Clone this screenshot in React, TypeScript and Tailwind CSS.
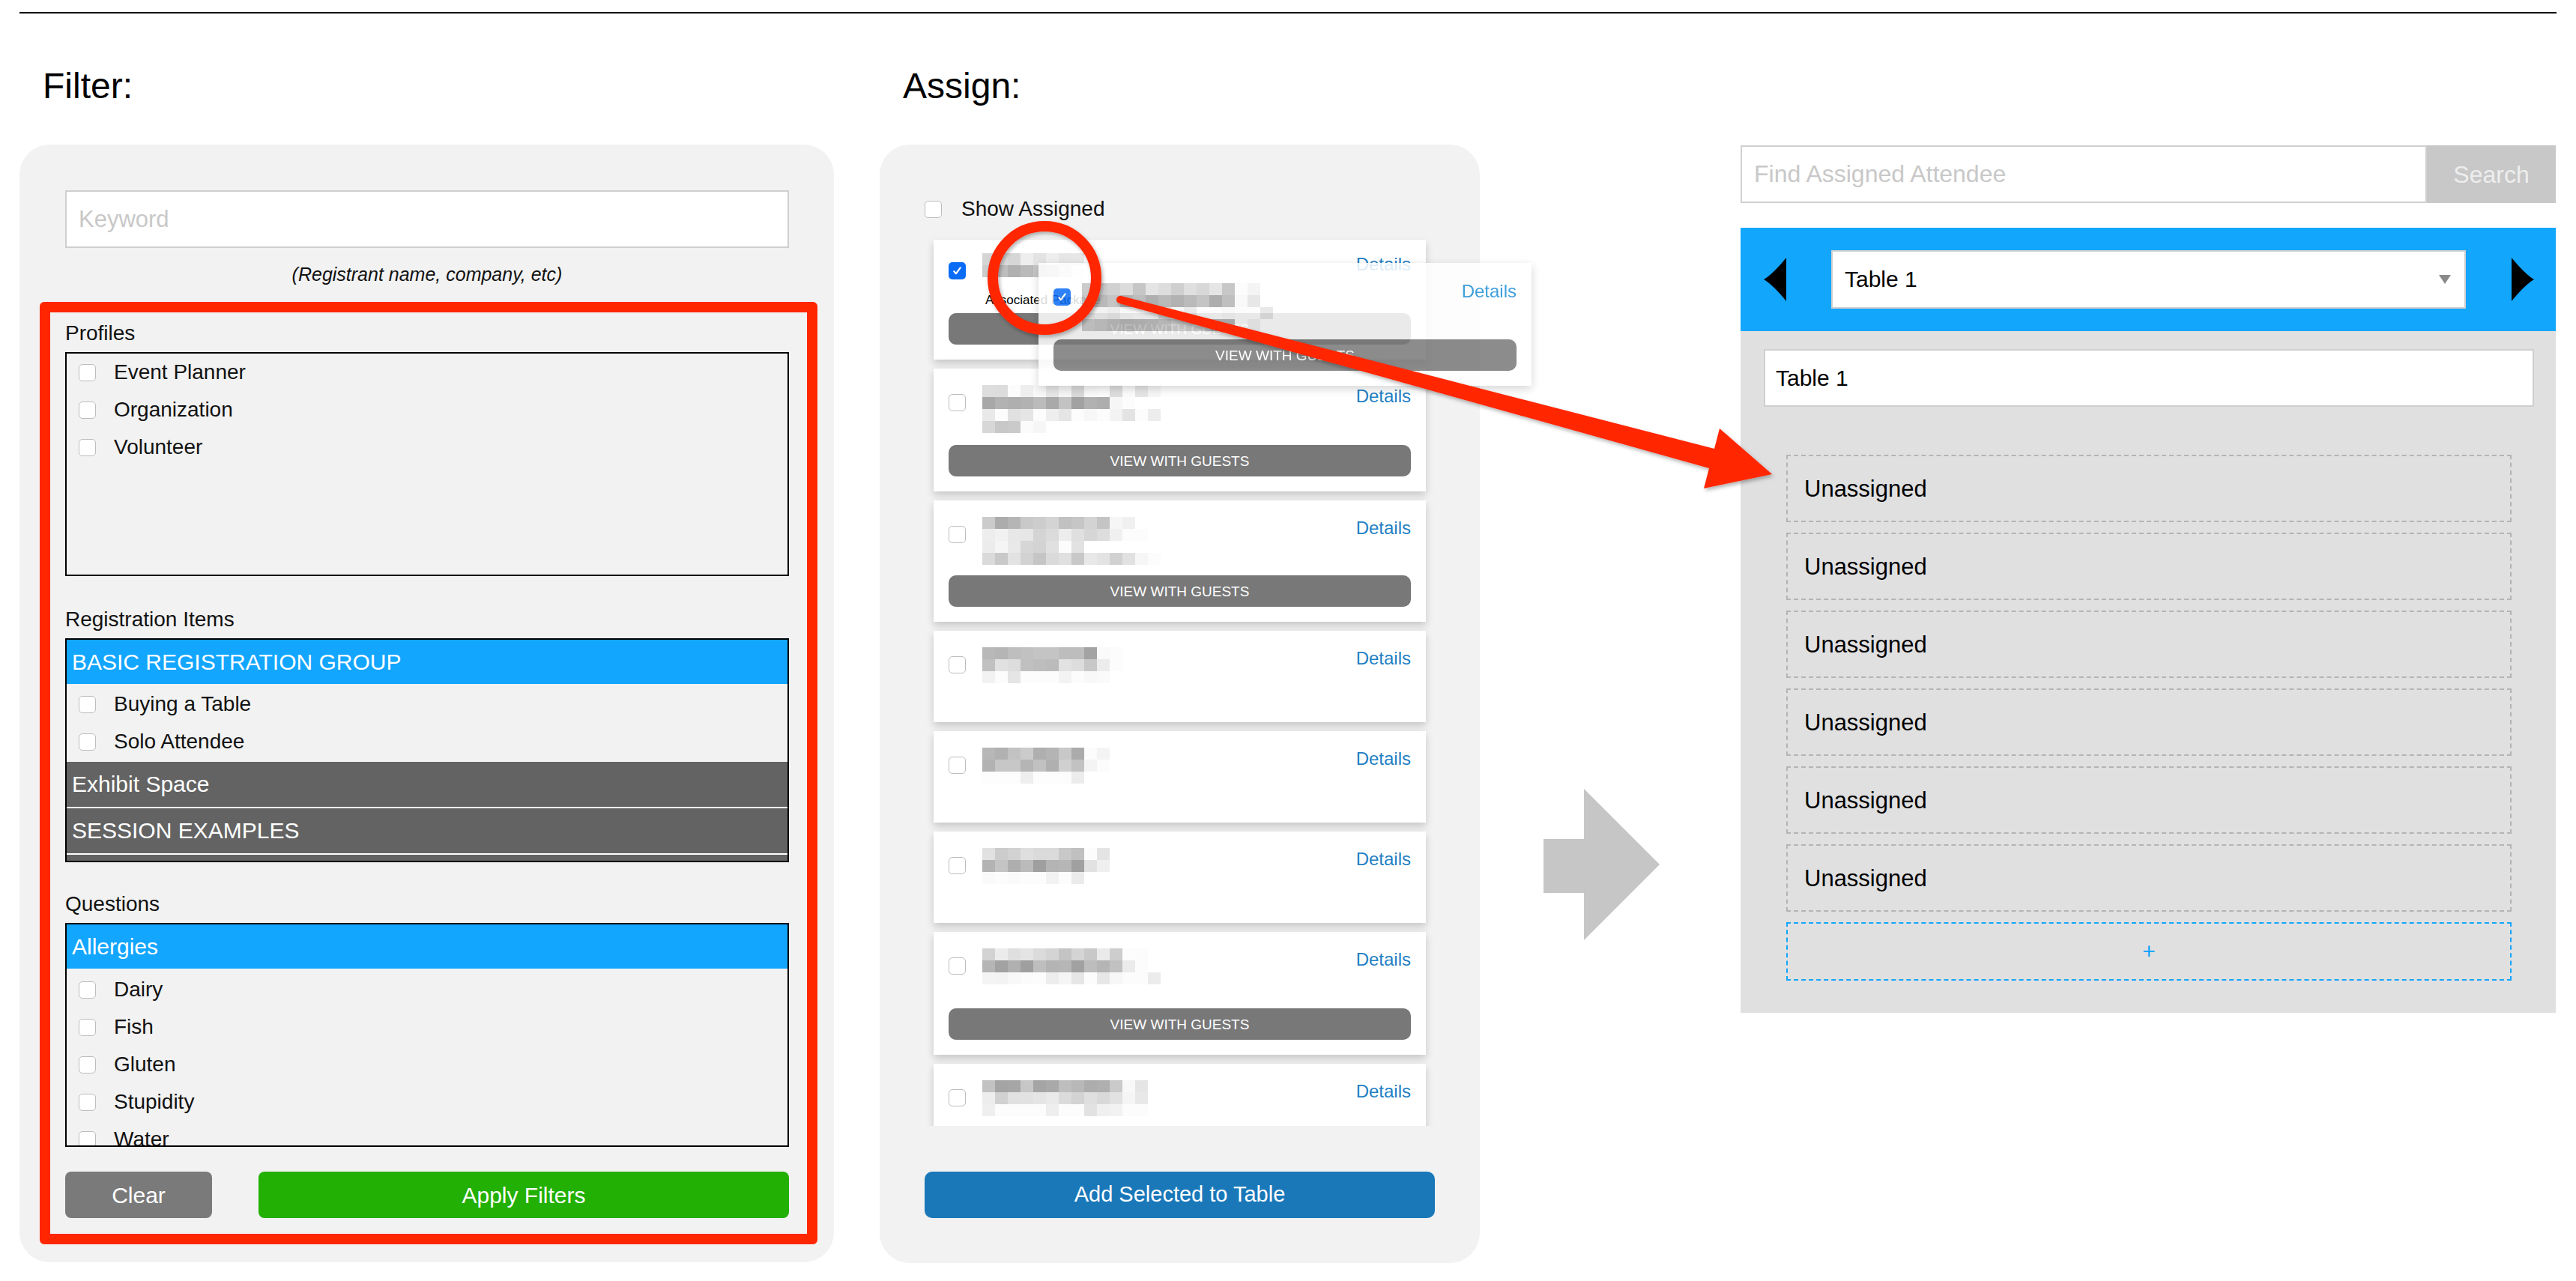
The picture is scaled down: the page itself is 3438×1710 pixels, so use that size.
import { FC } from "react";

// Shared font stack for the whole board
const FONT = "font-['Liberation_Sans',Arial,Helvetica,sans-serif]";

// Pseudo random value in [0, 1) for the pixelated name blocks
const noise = (seed: number, i: number) => {
	const v = Math.sin(seed * 78.233 + i * 12.9898) * 43758.5453;
	return v - Math.floor(v);
};

interface MosaicRow {
	tone: number;
	len: number;
}

// Pixelated placeholder used to hide attendee names
const Mosaic: FC<{ seed: number; rows: MosaicRow[]; className?: string }> = ({ seed, rows, className = "" }) => {
	return (
		<div className={`flex flex-col ${className}`}>
			{rows.map((row, r) => (
				<div className="flex" key={`row_${r}`}>
					{Array.from({ length: row.len + 2 }).map((_, c) => {
						const n = noise(seed, r * 31 + c);
						const base = c >= row.len ? 246 : row.tone;
						const g = Math.max(140, Math.min(252, Math.round(base + (n - 0.5) * 40)));
						return (
							<span
								key={`cell_${r}_${c}`}
								className="block h-[16px] w-[17px]"
								style={{ backgroundColor: `rgb(${g},${g},${g})` }}
							/>
						);
					})}
				</div>
			))}
		</div>
	);
};

// Checkbox drawn with spans so it looks the same everywhere
const Check: FC<{ checked?: boolean; className?: string }> = ({ checked, className = "" }) =>
	checked ? (
		<span
			className={`flex h-[23px] w-[23px] shrink-0 items-center justify-center rounded-[5px] bg-[#0a6cf5] ${className}`}
		>
			<svg viewBox="0 0 16 16" className="h-[15px] w-[15px]" fill="none" stroke="white" strokeWidth="2.3" strokeLinecap="round" strokeLinejoin="round">
				<path d="M3.5 8.8l2.8 3.2L12.5 3.5" />
			</svg>
		</span>
	) : (
		<span className={`block h-[23px] w-[23px] shrink-0 rounded-[5px] border border-[#bdbdbd] bg-white ${className}`} />
	);

// Filter option row
const Option: FC<{ label: string }> = ({ label }) => (
	<div className="flex h-[50px] shrink-0 items-center pl-[16px]">
		<Check />
		<span className="ml-[24px] text-[28px] leading-none text-[#111]">{label}</span>
	</div>
);

// Group header inside a filter list
const GroupBar: FC<{ label?: string; active?: boolean }> = ({ label, active }) => (
	<div
		className={
			active
				? "flex h-[59px] shrink-0 items-center bg-[#13a6ff] pl-[7px] text-[30px] leading-none text-white"
				: "flex h-[62px] shrink-0 items-center border-b-2 border-white bg-[#636363] pl-[7px] text-[30px] leading-none text-white"
		}
	>
		{label}
	</div>
);

const FilterBox: FC<{ title: string; className?: string; children: React.ReactNode }> = ({ title, className = "", children }) => (
	<div className={className}>
		<div className="h-[28px] text-[28px] leading-none text-[#111]">{title}</div>
		<div className="mt-[11px] flex h-[299px] flex-col overflow-hidden border-2 border-black">{children}</div>
	</div>
);

interface AttendeeCard {
	height: string;
	pt: string;
	checked?: boolean;
	button?: boolean;
	assoc?: boolean;
	seed: number;
	rows: MosaicRow[];
}

const cards: AttendeeCard[] = [
	{ height: "h-[160px]", pt: "pt-[21px]", checked: true, button: true, assoc: true, seed: 3, rows: [{ tone: 222, len: 7 }, { tone: 190, len: 6 }] },
	{ height: "h-[164px]", pt: "pt-[25px]", button: true, seed: 7, rows: [{ tone: 236, len: 12 }, { tone: 178, len: 10 }, { tone: 242, len: 12 }, { tone: 218, len: 3 }] },
	{ height: "h-[162px]", pt: "pt-[25px]", button: true, seed: 11, rows: [{ tone: 192, len: 10 }, { tone: 222, len: 11 }, { tone: 226, len: 6 }, { tone: 214, len: 12 }] },
	{ height: "h-[122px]", pt: "pt-[25px]", seed: 17, rows: [{ tone: 176, len: 9 }, { tone: 206, len: 9 }, { tone: 248, len: 8 }] },
	{ height: "h-[122px]", pt: "pt-[25px]", seed: 23, rows: [{ tone: 184, len: 8 }, { tone: 196, len: 8 }, { tone: 246, len: 6 }] },
	{ height: "h-[122px]", pt: "pt-[25px]", seed: 29, rows: [{ tone: 206, len: 8 }, { tone: 178, len: 8 }, { tone: 246, len: 6 }] },
	{ height: "h-[164px]", pt: "pt-[25px]", button: true, seed: 31, rows: [{ tone: 216, len: 11 }, { tone: 176, len: 11 }, { tone: 246, len: 12 }] },
	{ height: "h-[164px]", pt: "pt-[25px]", seed: 37, rows: [{ tone: 182, len: 11 }, { tone: 228, len: 11 }, { tone: 244, len: 11 }] },
];

const ViewWithGuests: FC = () => (
	<div className="mt-auto mb-[20px] flex h-[42px] shrink-0 items-center justify-center rounded-[10px] bg-[#787878] text-[19px] leading-none text-white">
		VIEW WITH GUESTS
	</div>
);

const Card: FC<{ card: AttendeeCard }> = ({ card }) => (
	<div className={`flex shrink-0 flex-col bg-white px-[20px] shadow-[0_5px_10px_rgba(0,0,0,0.18)] ${card.height} ${card.pt}`}>
		<div className="flex items-start">
			<Check checked={card.checked} className="mt-[9px]" />
			<div className="ml-[22px] mt-[-3px]">
				<Mosaic seed={card.seed} rows={card.rows} />
				{card.assoc && <div className="ml-[4px] mt-[22px] text-[17px] leading-none text-black">Associated Package</div>}
			</div>
			<span className="ml-auto text-[24px] leading-none text-[#1f7fc4]">Details</span>
		</div>
		{card.button && <ViewWithGuests />}
	</div>
);

const slots = ["Unassigned", "Unassigned", "Unassigned", "Unassigned", "Unassigned", "Unassigned"];

export default function App() {
	return (
		<div className={`relative h-[1710px] w-[3438px] overflow-hidden bg-white text-black ${FONT}`}>
			<div className="mx-[26px] mt-[16px] h-[2px] bg-black" />

			<div className="flex items-start">
				{/* Filter column */}
				<div className="ml-[26px] w-[1087px] shrink-0">
					<h2 className="mt-[73px] h-[48px] pl-[31px] text-[48px] leading-none font-normal">Filter:</h2>
					<div className="mt-[54px] rounded-[40px] bg-[#f2f2f2] pt-[61px] pr-[22px] pb-[24px] pl-[27px]">
						<input
							placeholder="Keyword"
							className="ml-[34px] mr-[38px] block h-[77px] w-[966px] border-2 border-[#cfcfcf] bg-white pl-[16px] text-[31px] outline-none placeholder:text-[#c8c8c8]"
						/>
						<p className="mt-[23px] ml-[34px] mr-[38px] text-center text-[25px] leading-none italic text-[#111]">
							(Registrant name, company, etc)
						</p>
						<div className="mt-[24px] rounded-[6px] border-[14px] border-[#ff2600] pt-[14px] pr-[24px] pb-[21px] pl-[20px]">
							<FilterBox title="Profiles">
								<Option label="Event Planner" />
								<Option label="Organization" />
								<Option label="Volunteer" />
							</FilterBox>
							<FilterBox title="Registration Items" className="mt-[44px]">
								<GroupBar label="BASIC REGISTRATION GROUP" active />
								<div className="py-[2px]">
									<Option label="Buying a Table" />
									<Option label="Solo Attendee" />
								</div>
								<GroupBar label="Exhibit Space" />
								<GroupBar label="SESSION EXAMPLES" />
								<GroupBar />
							</FilterBox>
							<FilterBox title="Questions" className="mt-[42px]">
								<GroupBar label="Allergies" active />
								<div className="pt-[3px]">
									<Option label="Dairy" />
									<Option label="Fish" />
									<Option label="Gluten" />
									<Option label="Stupidity" />
									<Option label="Water" />
								</div>
							</FilterBox>
							<div className="mt-[33px] flex h-[62px] gap-[62px]">
								<button className="w-[196px] rounded-[8px] bg-[#7a7a7a] text-[30px] text-white">Clear</button>
								<button className="flex-1 rounded-[8px] bg-[#23b005] text-[30px] text-white">Apply Filters</button>
							</div>
						</div>
					</div>
				</div>

				{/* Assign column */}
				<div className="ml-[61px] w-[801px] shrink-0">
					<h2 className="mt-[73px] h-[48px] pl-[31px] text-[48px] leading-none font-normal">Assign:</h2>
					<div className="mt-[54px] rounded-[40px] bg-[#f2f2f2] px-[60px] pt-[72px] pb-[60px]">
						<div className="flex h-[28px] items-center">
							<Check />
							<span className="ml-[26px] text-[28px] leading-none text-[#111]">Show Assigned</span>
						</div>
						<div className="mt-[15px] flex h-[1195px] flex-col gap-[12px] overflow-hidden px-[12px] pt-[12px]">
							{cards.map((card, index) => (
								<Card key={`card_${index}`} card={card} />
							))}
						</div>
						<button className="mt-[61px] h-[62px] w-full rounded-[10px] bg-[#1a78b9] text-[29px] text-white">
							Add Selected to Table
						</button>
					</div>
				</div>

				{/* Direction arrow */}
				<div className="w-[348px] shrink-0">
					<svg className="mt-[1035px] ml-[85px]" width="155" height="202" viewBox="0 0 155 202">
						<polygon points="0,67 54,67 54,0 155,101 54,202 54,139 0,139" fill="#c6c6c6" />
					</svg>
				</div>

				{/* Table seating */}
				<div className="mt-[176px] flex w-[1088px] shrink-0 flex-col">
					<div className="flex h-[77px]">
						<input
							placeholder="Find Assigned Attendee"
							className="h-full min-w-0 flex-1 border-2 border-[#d0d0d0] bg-white pl-[16px] text-[32px] outline-none placeholder:text-[#c8c8c8]"
						/>
						<div className="flex w-[172px] items-center justify-center bg-[#c8c8c8] text-[32px] text-[#eeeeee]">Search</div>
					</div>
					<div className="mt-[33px] flex h-[138px] items-center bg-[#12a6fd] pr-[29px] pl-[31px]">
						<svg width="30" height="58" viewBox="0 0 30 58">
							<path d="M30 0 Q12 22 0 29 Q12 36 30 58 Z" fill="#000" />
						</svg>
						<div className="ml-[60px] flex h-[78px] w-[847px] items-center border-2 border-[#cfcfcf] bg-white pr-[18px] pl-[16px]">
							<span className="text-[30px] leading-none text-black">Table 1</span>
							<svg className="ml-auto" width="16" height="12" viewBox="0 0 16 12">
								<polygon points="0,0 16,0 8,12" fill="#8a8a8a" />
							</svg>
						</div>
						<svg className="ml-[61px]" width="30" height="58" viewBox="0 0 30 58">
							<path d="M0 0 Q18 22 30 29 Q18 36 0 58 Z" fill="#000" />
						</svg>
					</div>
					<div className="bg-[#e0e0e0] pt-[24px] pr-[29px] pb-[43px] pl-[31px]">
						<div className="flex h-[77px] items-center border-2 border-[#cfcfcf] bg-white pl-[14px] text-[30px] leading-none">
							Table 1
						</div>
						<div className="mx-[30px] mt-[64px] flex flex-col gap-[14px]">
							{slots.map((slot, index) => (
								<div
									key={`slot_${index}`}
									className="flex h-[90px] items-center border-2 border-dashed border-[#b4b4b4] pl-[22px] text-[31px] leading-none text-black"
								>
									{slot}
								</div>
							))}
							<div className="flex h-[78px] items-center justify-center border-2 border-dashed border-[#12a6fd] text-[30px] leading-none text-[#12a6fd]">
								+
							</div>
						</div>
					</div>
				</div>
			</div>

			{/* Card being dragged */}
			<div className="absolute top-[351px] left-[1386px] flex h-[164px] w-[658px] flex-col bg-white px-[20px] pt-[26px] opacity-[0.85] shadow-[0_4px_12px_rgba(0,0,0,0.2)]">
				<div className="flex items-start">
					<Check checked className="mt-[8px]" />
					<Mosaic
						className="ml-[15px] mt-[1px]"
						seed={41}
						rows={[{ tone: 206, len: 12 }, { tone: 172, len: 12 }, { tone: 242, len: 13 }, { tone: 196, len: 12 }]}
					/>
					<span className="ml-auto text-[24px] leading-none text-[#1f8fd6]">Details</span>
				</div>
				<ViewWithGuests />
			</div>

			{/* Red markup on top */}
			<svg className="pointer-events-none absolute top-0 left-0" width="3438" height="1710" viewBox="0 0 3438 1710">
				<defs>
					<filter id="markShadow" x="-10%" y="-10%" width="120%" height="130%">
						<feDropShadow dx="2" dy="3" stdDeviation="2.5" floodColor="#000" floodOpacity="0.3" />
					</filter>
				</defs>
				<g filter="url(#markShadow)" fill="#ff2600">
					<circle cx="1394" cy="371" r="69" fill="none" stroke="#ff2600" strokeWidth="14" />
					<polygon points="1496,395 2288,599 2295,572 2365,633 2274,652 2281,625 1494,405" />
					<circle cx="1495" cy="400" r="5" />
				</g>
			</svg>
		</div>
	);
}
